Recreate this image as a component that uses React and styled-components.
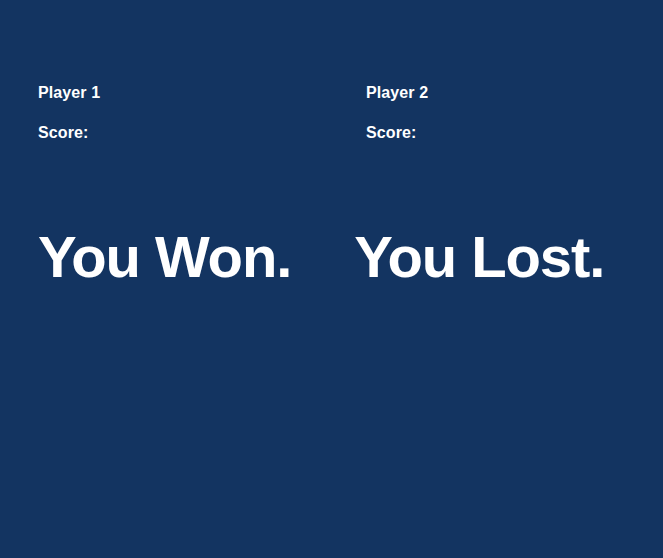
import React from 'react';
import styled, { createGlobalStyle } from 'styled-components';

const Global = createGlobalStyle`
	html, body {
		margin: 0;
		padding: 0;
		background: #133461;
	}
	body {
		font-family: 'Liberation Sans', Arial, Helvetica, sans-serif;
		color: #ffffff;
	}
`;

const Page = styled.div`
	min-height: 558px;
	padding: 84px 0 0 38px;
	box-sizing: border-box;
	background: #133461;
`;

const Players = styled.div`
	display: grid;
	grid-template-columns: 328px 328px;
`;

const Player = styled.div`
	display: flex;
	flex-direction: column;
	gap: 22px;
`;

const Label = styled.div`
	font-size: 16px;
	line-height: 18px;
	font-weight: 700;
	letter-spacing: 0.1px;
`;

const Results = styled.div`
	display: flex;
	gap: 63px;
	margin-top: 86px;
`;

const Result = styled.div`
	font-size: 58px;
	line-height: 58px;
	font-weight: 700;
	letter-spacing: -1.1px;
`;

const players = [
	{ name: 'Player 1', result: 'You Won.' },
	{ name: 'Player 2', result: 'You Lost.' },
];

export default function App() {
	return (
		<>
			<Global />
			<Page>
				<Players>
					{players.map((p) => (
						<Player key={p.name}>
							<Label>{p.name}</Label>
							<Label>Score:</Label>
						</Player>
					))}
				</Players>
				<Results>
					{players.map((p) => (
						<Result key={p.name}>{p.result}</Result>
					))}
				</Results>
			</Page>
		</>
	);
}
